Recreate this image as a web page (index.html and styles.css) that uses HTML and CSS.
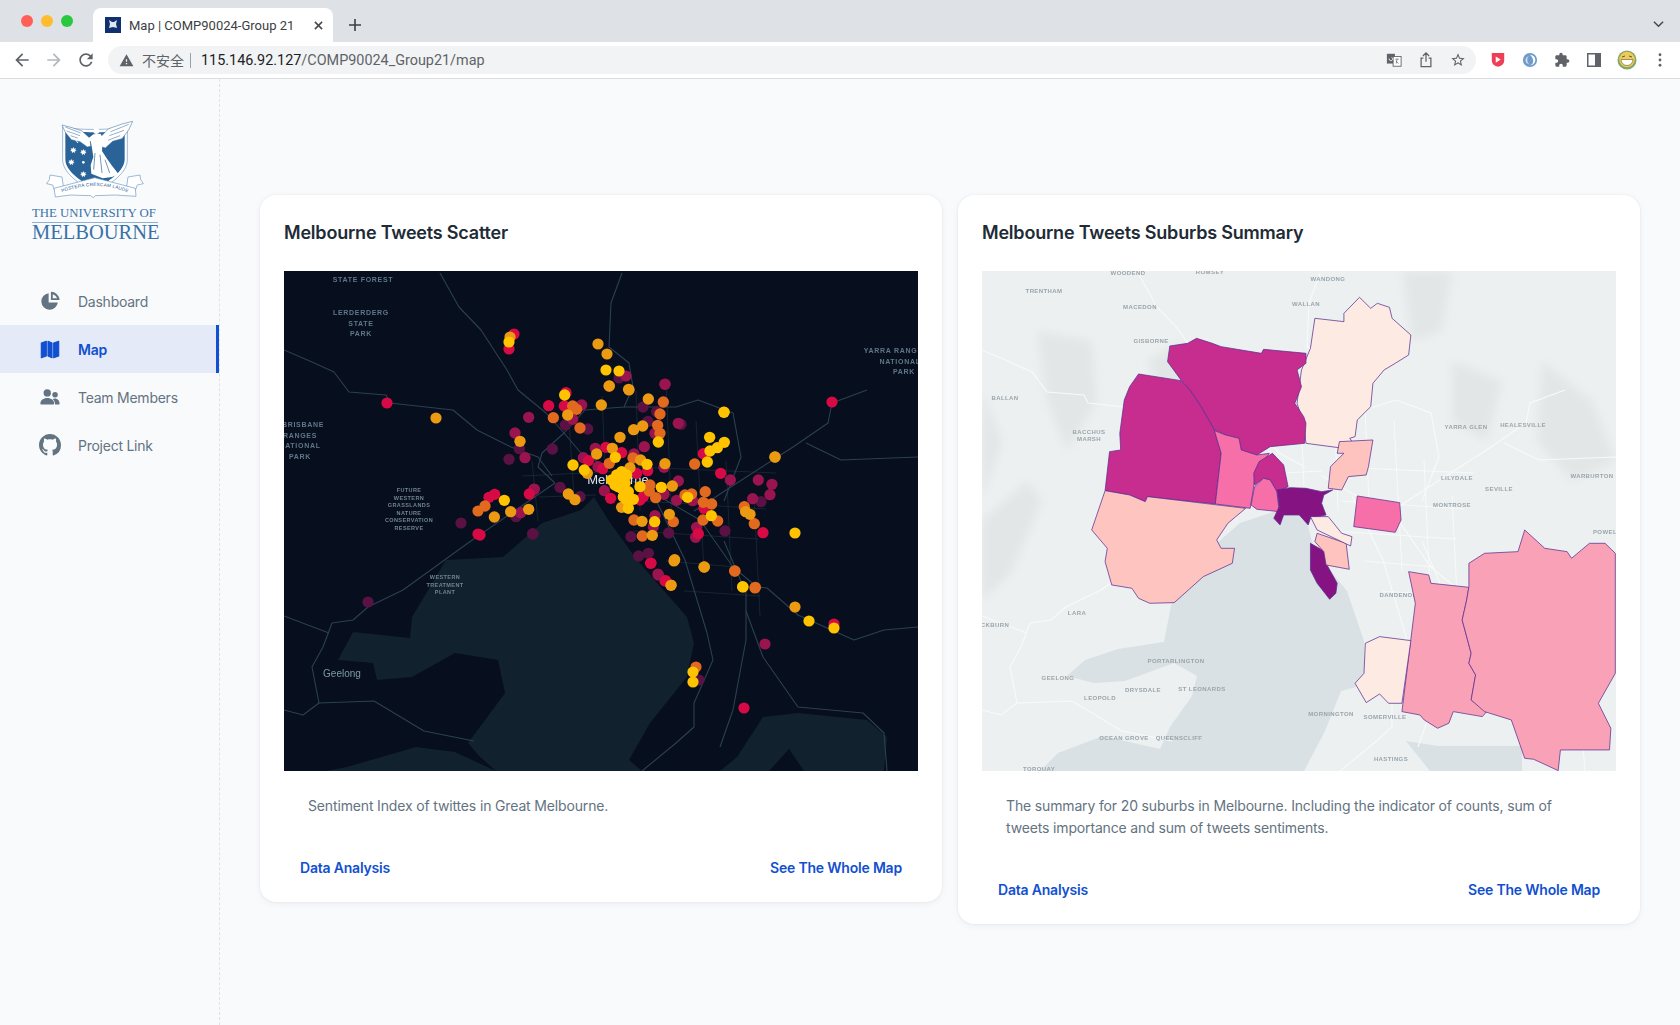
FILE: index.html
```html
<!DOCTYPE html>
<html lang="en">
<head>
    <meta charset="UTF-8">
    <title>Map | COMP90024-Group 21</title>
    <link rel="stylesheet" href="styles.css">
</head>
<body>
    <!-- Browser frame -->
    <div class="tabstrip">
        <div class="lights"><i class="red"></i><i class="amber"></i><i class="green"></i></div>
        <div class="tab">
            <svg class="favicon" viewBox="0 0 16 16"><rect width="16" height="16" fill="#10306f"/><path d="M4 3l3 2 2 0 3-2-1 4 1 4-4-1-4 1 1-4z" fill="#dfe7f3"/></svg>
            <span class="tab-title">Map | COMP90024-Group 21</span>
            <svg class="tab-close" viewBox="0 0 10 10"><path d="M1 1l8 8M9 1l-8 8" stroke="#45484d" stroke-width="1.7"/></svg>
        </div>
        <svg class="tab-new" viewBox="0 0 12 12"><path d="M6 0v12M0 6h12" stroke="#3c4043" stroke-width="1.6"/></svg>
        <svg class="tab-list" viewBox="0 0 12 8"><path d="M1 1.5l5 5 5-5" fill="none" stroke="#45484d" stroke-width="1.6"/></svg>
    </div>
    <div class="toolbar">
        <svg class="tool" viewBox="0 0 24 24"><path fill="#5f6368" d="M20 11H7.830l5.590-5.590L12 4l-8 8 8 8 1.410-1.410L7.830 13H20v-2z"/></svg>
        <svg class="tool" viewBox="0 0 24 24"><path fill="#b4b7bb" d="M4 11h12.170l-5.590-5.590L12 4l8 8-8 8-1.410-1.410L16.170 13H4v-2z"/></svg>
        <svg class="tool" viewBox="0 0 24 24"><path fill="#5f6368" d="M17.650 6.350C16.200 4.900 14.210 4 12 4c-4.420 0-7.990 3.580-7.990 8s3.570 8 7.990 8c3.730 0 6.840-2.550 7.730-6h-2.080c-.82 2.330-3.040 4-5.650 4-3.310 0-6-2.690-6-6s2.690-6 6-6c1.660 0 3.140.69 4.220 1.780L13 11h7V4l-2.350 2.350z"/></svg>
        <div class="omnibox">
            <svg class="warn" viewBox="0 0 24 24"><path fill="#5f6368" d="M1 21h22L12 2 1 21zm12-3h-2v-2h2v2zm0-4h-2v-4h2v4z"/></svg>
            <span class="insecure">不安全</span>
            <span class="url"><b>115.146.92.127</b>/COMP90024_Group21/map</span>
            <svg class="omni-icon" viewBox="0 0 18 18"><rect x="1" y="2" width="9" height="11" fill="#5f6368"/><rect x="8" y="5" width="9" height="11" fill="#fff" stroke="#5f6368"/><path d="M3.500 7.500a2 2 0 1 0 3-1.500" fill="none" stroke="#fff"/><path d="M10.500 8h4M12.500 8l-1 5M11 10l3 3" fill="none" stroke="#5f6368" stroke-width=".8"/></svg>
            <svg class="omni-icon" viewBox="0 0 18 18"><path d="M9 1v10M5.500 4.500L9 1l3.500 3.500M6 7H3.500v9.500h11V7H12" fill="none" stroke="#5f6368" stroke-width="1.400"/></svg>
            <svg class="omni-icon" viewBox="0 0 24 24"><path fill="#5f6368" d="M22 9.240l-7.190-.62L12 2 9.190 8.630 2 9.240l5.460 4.730L5.820 21 12 17.270 18.180 21l-1.630-7.030L22 9.240zM12 15.400l-3.760 2.270 1-4.280-3.320-2.880 4.380-.38L12 6.100l1.710 4.040 4.380.38-3.320 2.880 1 4.280L12 15.400z"/></svg>
        </div>
        <div class="extensions">
            <svg class="ext" viewBox="0 0 16 18"><path d="M1 1h14v8.500a7 7 0 0 1-7 7 7 7 0 0 1-7-7z" fill="#ef3f56"/><path d="M5.500 5l5.500 3.500-5.500 3.500z" fill="#fff"/></svg>
            <svg class="ext" viewBox="0 0 18 18"><circle cx="9" cy="9" r="8" fill="#6f9bcb"/><path d="M9 3a6 6 0 0 1 0 12c3-1 4-3 3.500-6S10 4 9 3z" fill="#fff"/><path d="M9 4c-2.500 1-3.500 3-3 6s2 3.500 3 4c-4-.5-5-3-5-5s2-4.500 5-5z" fill="#d5e3f1"/></svg>
            <svg class="ext" viewBox="0 0 24 24"><path fill="#5f6368" d="M20.500 11H19V7c0-1.100-.9-2-2-2h-4V3.500C13 2.120 11.880 1 10.500 1S8 2.120 8 3.500V5H4c-1.100 0-1.990.9-1.990 2v3.800H3.500c1.490 0 2.700 1.210 2.700 2.700s-1.210 2.700-2.700 2.700H2V20c0 1.100.9 2 2 2h3.800v-1.500c0-1.490 1.210-2.700 2.700-2.700 1.490 0 2.700 1.210 2.700 2.700V22H17c1.100 0 2-.9 2-2v-4h1.500c1.380 0 2.500-1.120 2.500-2.500S21.880 11 20.500 11z"/></svg>
            <svg class="ext" viewBox="0 0 16 16"><path fill="#5f6368" d="M1 1h14v14H1zM2.500 2.500v11H9v-11z" fill-rule="evenodd"/></svg>
            <svg class="ext avatar" viewBox="0 0 20 20"><circle cx="10" cy="10" r="9.500" fill="#7fa868"/><circle cx="10" cy="9.500" r="7.800" fill="#efc95a"/><path d="M4 9.500h12a6 6 0 0 1-12 0z" fill="#fff" stroke="#6a5a2a" stroke-width=".6"/><path d="M5 7l3-1M12 6l3 1" stroke="#6a5a2a"/></svg>
            <svg class="ext kebab" viewBox="0 0 4 16"><circle cx="2" cy="2" r="1.600" fill="#5f6368"/><circle cx="2" cy="8" r="1.600" fill="#5f6368"/><circle cx="2" cy="14" r="1.600" fill="#5f6368"/></svg>
        </div>
    </div>

    <div class="app">
        <aside class="sidebar">
            <div class="logo">
                <svg class="crest" viewBox="135 85 300 240">
                    <!-- ribbon ends -->
                    <path d="M150 256l36 6 4 28-26 12-6-16-18-4 8-12z" fill="#fff" stroke="#6b97c4" stroke-width="2"/>
                    <path d="M420 256l-36 6-4 28 26 12 6-16 18-4-8-12z" fill="#fff" stroke="#6b97c4" stroke-width="2"/>
                    <!-- shield -->
                    <path d="M188 112c40 10 155 10 194-2v100c0 40-50 72-97 102-47-30-97-62-97-102z" fill="#fff" stroke="#6b97c4" stroke-width="2"/>
                    <path d="M196 122c40 8 140 8 178-2v88c0 36-44 64-89 92-45-28-89-56-89-92z" fill="#2a6397"/>
                    <!-- wings -->
                    <path d="M186 106l30 8 30 10 24 22 2 24-10 2-22-16-26-6-18-22z" fill="#fff" stroke="#2a6397" stroke-width="1.500"/>
                    <path d="M200 124l40 14M212 138l34 12M196 112l46 18" stroke="#2a6397" stroke-width="1.500" fill="none"/>
                    <path d="M398 95l-32 8-40 14-24 24 2 30 12 4 22-20 28-8 20-26z" fill="#fff" stroke="#2a6397" stroke-width="1.500"/>
                    <path d="M372 122l-44 16M360 138l-36 14M386 104l-54 22" stroke="#2a6397" stroke-width="1.500" fill="none"/>
                    <!-- figure -->
                    <circle cx="289" cy="124" r="9" fill="#fff"/>
                    <path d="M280 134l22-2 6 14-2 38 14 22 16 22 20 26-20 8-28 4-34-14-2-26 8-24-4-26-4-22-16 4-24-10 2-6 26 8z" fill="#fff"/>
                    <path d="M285 190l-4 50M300 195l6 55M315 210l14 40" stroke="#2a6397" stroke-width="2" fill="none"/>
                    <path d="M220 142l14 18" stroke="#fff" stroke-width="3"/>
                    <!-- southern cross -->
                    <path id="star" d="M220 172l2.400 5.600 5.600-2-2.400 5.400 4.400 3-5.600 1-.4 5.800-4-4.200-4 4.200-.4-5.800-5.600-1 4.400-3-2.400-5.400 5.600 2z" fill="#fff"/>
                    <use href="#star" x="30" y="6"/><use href="#star" x="-6" y="36"/><use href="#star" x="30" y="72"/>
                    <circle cx="250" cy="218" r="4" fill="#fff"/>
                    <!-- motto -->
                    <path d="M162 296l122-32 122 32 2 24-62-4-60 2-6 6-8-6-60-2-46 6z" fill="#fff" stroke="#6b97c4" stroke-width="2"/>
                    <path id="motto" d="M168 316Q285 262 402 316" fill="none"/>
                    <text class="motto"><textPath href="#motto" startOffset="50%" text-anchor="middle">POSTERA CRESCAM LAUDE</textPath></text>
                </svg>
                <div class="uni-small">THE UNIVERSITY OF</div>
                <div class="uni-big">MELBOURNE</div>
            </div>
            <nav class="menu">
                <a class="menu-item" href="#">
                    <svg class="menu-icon" viewBox="0 0 24 24"><path d="M10.500 3.500A9 9 0 1 0 20.500 13.500h-10z"/><path fill-rule="evenodd" d="M13 2v9h9.500A9.500 9.500 0 0 0 13 2zm2 2.600A7.300 7.300 0 0 1 19.800 9H15z"/></svg>
                    Dashboard
                </a>
                <a class="menu-item active" href="#">
                    <svg class="menu-icon" viewBox="0 0 24 24"><path d="M2.500 5.500l5.500-2v16l-5.500 2zM9.800 3.500l4.400 2v16l-4.400-2zM16 5.500l5.500-2v16l-5.500 2z" stroke="currentColor" stroke-width="1.200" stroke-linejoin="round"/></svg>
                    Map
                </a>
                <a class="menu-item" href="#">
                    <svg class="menu-icon" viewBox="0 0 24 24"><circle cx="9" cy="7.500" r="4"/><circle cx="17.500" cy="9.500" r="3"/><path d="M9 13c-4.200 0-7.500 2.500-7.500 6 0 .8.500 1.300 1.200 1.300h12.600c.7 0 1.200-.5 1.200-1.300 0-3.500-3.300-6-7.500-6z"/><path d="M17.500 13.500c-1 0-1.900.2-2.700.6 1.700 1.300 2.700 3.500 2.700 6.200h4.200c.5 0 .8-.4.8-.9 0-3.300-2.200-5.900-5-5.900z"/></svg>
                    Team Members
                </a>
                <a class="menu-item" href="#">
                    <svg class="menu-icon" viewBox="0 0 16 16"><path d="M8 0C3.580 0 0 3.580 0 8c0 3.540 2.290 6.530 5.470 7.590.4.070.55-.17.55-.38 0-.19-.01-.82-.01-1.490-2.010.37-2.530-.49-2.690-.94-.09-.23-.48-.94-.82-1.130-.28-.15-.68-.52-.01-.53.63-.01 1.080.58 1.230.82.72 1.210 1.870.87 2.330.66.070-.52.28-.87.51-1.070-1.780-.2-3.640-.89-3.640-3.950 0-.87.31-1.590.82-2.150-.08-.2-.36-1.020.08-2.120 0 0 .67-.21 2.200.82.64-.18 1.320-.27 2-.27.68 0 1.360.09 2 .27 1.530-1.040 2.200-.82 2.200-.82.44 1.100.16 1.920.08 2.120.51.56.82 1.270.82 2.150 0 3.070-1.870 3.750-3.650 3.950.29.25.54.73.54 1.480 0 1.070-.01 1.930-.01 2.200 0 .21.15.46.55.38A8.013 8.013 0 0 0 16 8c0-4.420-3.580-8-8-8z"/></svg>
                    Project Link
                </a>
            </nav>
        </aside>

        <main class="content">
            <section class="card">
                <h2 class="card-title">Melbourne Tweets Scatter</h2>
                <svg class="map" viewBox="0 0 634 500">
                    <defs>
                        <!-- roads are shared by both maps -->
                        <g id="roads">
                            <path d="M0 79L28 91 50 101 65 121 102 124 106 132 169 139 193 159 227 176 254 186 268 205"/>
                            <path d="M156 2L175 36 197 59 223 99 234 119 262 142 280 162 297 182 323 196"/>
                            <path d="M338 2L327 32 325 76 345 92 349 116 340 136 301 139 280 162 258 182 254 196 271 212"/>
                            <path d="M271 212L184 272 119 319 84 336 69 349 48 352 39 376 28 396 35 432 19 444 0 439"/>
                            <path d="M340 205L416 249 449 296 473 316 483 317 514 344 570 369 600 359 634 356"/>
                            <path d="M370 225L401 289 423 362 429 389 410 432 410 456 392 472 358 500"/>
                            <path d="M440 270L462 322 462 369 449 439 436 476"/>
                            <path d="M462 340L479 386 514 436 579 442 600 462 603 500"/>
                            <path d="M410 240L453 212 509 176 544 152 548 132 583 119"/>
                            <path d="M522 172L557 189 634 186"/>
                            <path d="M340 136L392 136 414 129 449 142 457 186 440 230"/>
                            <path d="M35 432L90 430 140 460 190 470"/>
                            <path d="M0 345L45 362"/>
                        </g>
                        <g id="streets">
                            <path d="M248 190L254 250M285 150L290 225M318 125L322 215M352 120L356 240M382 112L388 255M412 150L420 300M442 190L448 320M470 225L476 345"/>
                            <path d="M238 205L340 200M255 226L312 224M352 196L492 202M360 230L482 238M350 260L474 268M382 290L452 296M400 320L476 325"/>
                        </g>
                        <filter id="soft"><feGaussianBlur stdDeviation="5"/></filter>
                    </defs>
                    <rect width="634" height="500" fill="#070e1d"/>
                    <path fill="#11212e" d="M310 226L297 239 258 252 219 286 162 289 128 346 126 367 69 361 54 389 89 392 93 409 128 406 171 382 214 389 221 422 184 472 195 485 212 500H358L345 489 366 452 403 406 410 372 403 346 353 289 325 250z"/>
                    <path fill="#11212e" d="M132 476L171 481 212 500H41L63 496z"/>
                    <path fill="#11212e" d="M453 486L479 446 514 442 583 449 603 466 600 500H436z"/>
                    <path d="M485 500L505 478 520 500z" fill="#070e1d"/>
                    <use href="#streets" fill="none" stroke="#1a2b3b" stroke-width=".8"/>
                    <use href="#roads" fill="none" stroke="#2b4053" stroke-width="1.100" stroke-linejoin="round"/>
                    <text class="lab-dark" x="79" y="11">STATE FOREST</text>
                    <text class="lab-dark" x="77" y="44">LERDERDERG</text>
                    <text class="lab-dark" x="77" y="55">STATE</text>
                    <text class="lab-dark" x="77" y="65">PARK</text>
                    <text class="lab-dark" x="612" y="82">YARRA RANGES</text>
                    <text class="lab-dark" x="616" y="93">NATIONAL</text>
                    <text class="lab-dark" x="620" y="103">PARK</text>
                    <text class="lab-dark" x="19" y="156">BRISBANE</text>
                    <text class="lab-dark" x="16" y="167">RANGES</text>
                    <text class="lab-dark" x="16" y="177">NATIONAL</text>
                    <text class="lab-dark" x="16" y="188">PARK</text>
                    <g class="lab-tiny">
                        <text class="lab-dark" x="125" y="221">FUTURE</text>
                        <text class="lab-dark" x="125" y="229">WESTERN</text>
                        <text class="lab-dark" x="125" y="236">GRASSLANDS</text>
                        <text class="lab-dark" x="125" y="244">NATURE</text>
                        <text class="lab-dark" x="125" y="251">CONSERVATION</text>
                        <text class="lab-dark" x="125" y="259">RESERVE</text>
                        <text class="lab-dark" x="161" y="308">WESTERN</text>
                        <text class="lab-dark" x="161" y="316">TREATMENT</text>
                        <text class="lab-dark" x="161" y="323">PLANT</text>
                    </g>
                    <text class="lab-geelong" x="58" y="406">Geelong</text>
                    <text class="lab-city" x="334" y="213">Melbourne</text>
                    <!-- outer points -->
                    <g class="dots">
                        <circle class="r" cx="230" cy="63"/><circle class="a" cx="226" cy="66"/><circle class="r" cx="225" cy="78"/><circle class="y" cx="225" cy="71"/>
                        <circle class="a" cx="314" cy="73"/><circle class="a" cx="323" cy="83"/><circle class="p" cx="335" cy="107"/><circle class="c" cx="342" cy="105"/><circle class="y" cx="322" cy="99"/><circle class="y" cx="335" cy="100"/>
                        <circle class="o" cx="325" cy="115"/><circle class="a" cx="345" cy="119"/><circle class="c" cx="381" cy="113"/>
                        <circle class="r" cx="103" cy="132"/><circle class="a" cx="152" cy="147"/><circle class="r" cx="548" cy="131"/><circle class="y" cx="440" cy="141"/>
                        <circle class="y" cx="511" cy="262"/><circle class="a" cx="491" cy="186"/>
                        <circle class="p" cx="84" cy="331"/><circle class="o" cx="451" cy="300"/><circle class="a" cx="420" cy="296"/><circle class="c" cx="374" cy="303"/><circle class="r" cx="367" cy="292"/><circle class="r" cx="381" cy="310"/><circle class="a" cx="387" cy="314"/><circle class="a" cx="390" cy="290"/>
                        <circle class="y" cx="459" cy="316"/><circle class="o" cx="471" cy="317"/><circle class="a" cx="511" cy="336"/><circle class="y" cx="525" cy="350"/><circle class="r" cx="550" cy="353"/><circle class="y" cx="550" cy="357"/>
                        <circle class="c" cx="481" cy="373"/><circle class="p" cx="415" cy="409"/><circle class="o" cx="412" cy="396"/><circle class="y" cx="409" cy="401"/><circle class="y" cx="409" cy="411"/><circle class="r" cx="460" cy="437"/>
                        <circle class="p" cx="177" cy="252"/><circle class="r" cx="194" cy="263"/><circle class="p" cx="249" cy="263"/>
                        <circle class="o" cx="194" cy="240"/><circle class="c" cx="250" cy="218"/>
                    </g>
                    <!-- centre points, in the scale of the cluster -->
                    <g class="dots-centre" transform="translate(196 109) scale(.3333)">
                        <circle class="p" cx="118" cy="206"/><circle class="p" cx="217" cy="207"/><circle class="p" cx="87" cy="238"/><circle class="p" cx="256" cy="135"/><circle class="p" cx="323" cy="147"/><circle class="p" cx="489" cy="81"/><circle class="p" cx="530" cy="95"/><circle class="p" cx="504" cy="124"/><circle class="p" cx="603" cy="133"/><circle class="p" cx="843" cy="365"/><circle class="p" cx="735" cy="453"/><circle class="p" cx="566" cy="459"/><circle class="p" cx="453" cy="470"/><circle class="p" cx="476" cy="528"/><circle class="p" cx="505" cy="520"/><circle class="p" cx="300" cy="350"/><circle class="p" cx="240" cy="322"/><circle class="p" cx="108" cy="410"/><circle class="p" cx="158" cy="461"/>
                        <circle class="c" cx="146" cy="112"/><circle class="c" cx="305" cy="75"/><circle class="c" cx="278" cy="118"/><circle class="c" cx="555" cy="13"/><circle class="c" cx="525" cy="160"/><circle class="c" cx="493" cy="200"/><circle class="c" cx="595" cy="130"/><circle class="c" cx="105" cy="159"/><circle class="c" cx="135" cy="233"/><circle class="c" cx="346" cy="205"/><circle class="c" cx="462" cy="222"/><circle class="c" cx="310" cy="233"/><circle class="c" cx="354" cy="260"/><circle class="c" cx="552" cy="262"/><circle class="c" cx="595" cy="303"/><circle class="c" cx="751" cy="300"/><circle class="c" cx="835" cy="300"/><circle class="c" cx="876" cy="313"/><circle class="c" cx="870" cy="344"/><circle class="c" cx="818" cy="356"/><circle class="c" cx="552" cy="343"/><circle class="c" cx="590" cy="361"/><circle class="c" cx="638" cy="362"/><circle class="c" cx="650" cy="442"/><circle class="c" cx="647" cy="472"/><circle class="c" cx="525" cy="407"/><circle class="c" cx="520" cy="440"/><circle class="c" cx="535" cy="585"/><circle class="c" cx="373" cy="332"/><circle class="c" cx="163" cy="328"/><circle class="c" cx="122" cy="398"/>
                        <circle class="r" cx="258" cy="38"/><circle class="r" cx="206" cy="77"/><circle class="r" cx="253" cy="78"/><circle class="r" cx="378" cy="202"/><circle class="r" cx="425" cy="218"/><circle class="r" cx="325" cy="242"/><circle class="r" cx="368" cy="266"/><circle class="r" cx="503" cy="272"/><circle class="r" cx="670" cy="221"/><circle class="r" cx="722" cy="280"/><circle class="r" cx="672" cy="385"/><circle class="r" cx="849" cy="458"/><circle class="r" cx="655" cy="461"/><circle class="r" cx="512" cy="550"/><circle class="r" cx="557" cy="602"/><circle class="r" cx="392" cy="355"/><circle class="r" cx="148" cy="342"/><circle class="r" cx="44" cy="343"/><circle class="r" cx="27" cy="352"/><circle class="r" cx="0" cy="465"/><circle class="r" cx="470" cy="280"/><circle class="r" cx="490" cy="350"/><circle class="r" cx="480" cy="360"/>
                        <circle class="o" cx="278" cy="78"/><circle class="o" cx="290" cy="88"/><circle class="o" cx="220" cy="113"/><circle class="o" cx="300" cy="144"/><circle class="o" cx="550" cy="66"/><circle class="o" cx="540" cy="102"/><circle class="o" cx="533" cy="136"/><circle class="o" cx="540" cy="160"/><circle class="o" cx="644" cy="252"/><circle class="o" cx="459" cy="234"/><circle class="o" cx="388" cy="250"/><circle class="o" cx="676" cy="335"/><circle class="o" cx="510" cy="315"/><circle class="o" cx="508" cy="333"/><circle class="o" cx="527" cy="353"/><circle class="o" cx="615" cy="345"/><circle class="o" cx="635" cy="342"/><circle class="o" cx="670" cy="367"/><circle class="o" cx="695" cy="372"/><circle class="o" cx="669" cy="420"/><circle class="o" cx="713" cy="423"/><circle class="o" cx="793" cy="380"/><circle class="o" cx="823" cy="431"/><circle class="o" cx="580" cy="425"/><circle class="o" cx="462" cy="420"/><circle class="o" cx="487" cy="468"/><circle class="o" cx="764" cy="573"/><circle class="o" cx="826" cy="622"/><circle class="o" cx="15" cy="378"/>
                        <circle class="a" cx="388" cy="18"/><circle class="a" cx="446" cy="28"/><circle class="a" cx="364" cy="75"/><circle class="a" cx="505" cy="57"/><circle class="a" cx="263" cy="105"/><circle class="a" cx="461" cy="149"/><circle class="a" cx="488" cy="138"/><circle class="a" cx="420" cy="172"/><circle class="a" cx="120" cy="184"/><circle class="a" cx="885" cy="231"/><circle class="a" cx="397" cy="205"/><circle class="a" cx="482" cy="240"/><circle class="a" cx="350" cy="222"/><circle class="a" cx="322" cy="280"/><circle class="a" cx="450" cy="263"/><circle class="a" cx="555" cy="251"/><circle class="a" cx="577" cy="318"/><circle class="a" cx="797" cy="395"/><circle class="a" cx="810" cy="403"/><circle class="a" cx="568" cy="403"/><circle class="a" cx="486" cy="424"/><circle class="a" cx="517" cy="466"/><circle class="a" cx="584" cy="539"/><circle class="a" cx="673" cy="561"/><circle class="a" cx="573" cy="616"/><circle class="a" cx="265" cy="342"/><circle class="a" cx="285" cy="359"/><circle class="a" cx="92" cy="395"/><circle class="a" cx="146" cy="388"/><circle class="a" cx="43" cy="411"/><circle class="a" cx="425" cy="382"/>
                        <circle class="y" cx="254" cy="45"/><circle class="y" cx="535" cy="186"/><circle class="y" cx="732" cy="97"/><circle class="y" cx="689" cy="172"/><circle class="y" cx="733" cy="187"/><circle class="y" cx="712" cy="203"/><circle class="y" cx="690" cy="213"/><circle class="y" cx="682" cy="246"/><circle class="y" cx="406" cy="232"/><circle class="y" cx="279" cy="255"/><circle class="y" cx="313" cy="270"/><circle class="y" cx="501" cy="253"/><circle class="y" cx="544" cy="322"/><circle class="y" cx="480" cy="320"/><circle class="y" cx="623" cy="352"/><circle class="y" cx="694" cy="407"/><circle class="y" cx="524" cy="425"/><circle class="y" cx="788" cy="620"/><circle class="y" cx="73" cy="361"/>
                        <circle class="y" cx="395" cy="300"/><circle class="y" cx="410" cy="285"/><circle class="y" cx="425" cy="275"/><circle class="y" cx="440" cy="285"/><circle class="y" cx="420" cy="305"/><circle class="y" cx="405" cy="315"/><circle class="y" cx="425" cy="325"/><circle class="y" cx="445" cy="335"/><circle class="y" cx="430" cy="350"/><circle class="y" cx="440" cy="360"/><circle class="y" cx="460" cy="358"/><circle class="y" cx="445" cy="385"/><circle class="y" cx="410" cy="300"/><circle class="y" cx="430" cy="295"/><circle class="y" cx="435" cy="310"/><circle class="y" cx="415" cy="320"/>
                    </g>
                </svg>
                <p class="card-text">Sentiment Index of twittes in Great Melbourne.</p>
                <div class="card-actions"><a href="#">Data Analysis</a><a href="#">See The Whole Map</a></div>
            </section>

            <section class="card">
                <h2 class="card-title">Melbourne Tweets Suburbs Summary</h2>
                <svg class="map" viewBox="0 0 634 500">
                    <rect width="634" height="500" fill="#ecf0f1"/>
                    <g fill="#e2e6e6" filter="url(#soft)">
                        <path d="M55 60L110 70 115 130 85 180 65 130zM165 90L200 70 220 100 190 140zM420 0H470L460 60 430 70zM470 90L520 110 505 170 470 150zM560 90L610 130 634 190 590 210 555 170zM0 120L20 170 0 230zM0 250L45 210 60 230 30 300 0 330z"/>
                    </g>
                    <path fill="#d9e1e4" d="M310 226L297 239 258 252 219 286 190 330 182 371 136 378 103 389 85 405 112 412 143 410 192 392 215 405 210 425 188 456 178 478 121 465 76 482 58 500H322L343 460 359 420 382 414 382 370 365 320 332 280 325 250z"/>
                    <path fill="#d9e1e4" d="M424 470L456 475 540 475 540 500H448z"/>
                    <use href="#streets" fill="none" stroke="#f8fafa" stroke-width=".9"/>
                    <use href="#roads" fill="none" stroke="#f8fafa" stroke-width="1.100"/>
                    <g class="lab-light">
                        <text x="146" y="4">WOODEND</text><text x="228" y="3">ROMSEY</text><text x="62" y="22">TRENTHAM</text><text x="346" y="10">WANDONG</text><text x="324" y="35">WALLAN</text><text x="158" y="38">MACEDON</text><text x="169" y="72">GISBORNE</text><text x="23" y="129">BALLAN</text><text x="107" y="163">BACCHUS</text><text x="107" y="170">MARSH</text><text x="484" y="158">YARRA GLEN</text><text x="541" y="156">HEALESVILLE</text><text x="475" y="209">LILYDALE</text><text x="610" y="207">WARBURTON</text><text x="517" y="220">SEVILLE</text><text x="470" y="236">MONTROSE</text><text x="625" y="263">POWELL</text><text x="95" y="344">LARA</text><text x="13" y="356">CKBURN</text><text x="419" y="326">DANDENONG</text><text x="194" y="392">PORTARLINGTON</text><text x="76" y="409">GEELONG</text><text x="161" y="421">DRYSDALE</text><text x="220" y="420">ST LEONARDS</text><text x="118" y="429">LEOPOLD</text><text x="349" y="445">MORNINGTON</text><text x="403" y="448">SOMERVILLE</text><text x="142" y="469">OCEAN GROVE</text><text x="197" y="469">QUEENSCLIFF</text><text x="409" y="490">HASTINGS</text><text x="57" y="500">TORQUAY</text>
                    </g>
                    <!-- suburbs traced in a stretched grid, hence the scale -->
                    <g class="suburbs" transform="translate(-22 -81) scale(.4464 .3333)">
                        <path fill="#fdeae3" d="M895 322L920 355 935 340 962 352 968 385 1010 435 1005 495 975 520 950 540 925 580 920 650 890 690 885 740 873 745 887 770 848 773 775 760 770 700 755 640 765 540 785 475 795 385 860 395 860 370z"/>
                        <path fill="#c72c8f" d="M465 515L470 468 510 460 530 445 565 460 585 470 675 490 680 478 775 490 775 520 755 540 765 590 750 640 770 680 775 700 772 760 695 770 665 795 630 780 625 745 595 735 570 720 540 650 515 600 495 570z"/>
                        <path fill="#c72c8f" d="M400 552L495 572 515 600 540 650 570 720 585 790 572 942 420 920 415 935 380 915 325 902 335 785 360 780 358 730 368 630 380 590z"/>
                        <path fill="#f76fa8" d="M570 722L595 735 625 745 630 780 665 795 693 790 660 850 658 890 650 955 572 942 585 790z"/>
                        <path fill="#c72c8f" d="M700 790L725 825 735 890 710 905 695 870 680 865 660 885 658 850 670 815z"/>
                        <path fill="#f76fa8" d="M680 865L695 870 710 905 715 965 665 958 652 945 660 890z"/>
                        <path fill="#851482" d="M710 900L740 893 775 895 810 905 835 900 815 915 810 940 820 975 785 985 780 1005 760 975 725 975 717 1005 703 985 715 950z"/>
                        <path fill="#fec3bf" d="M850 755L925 750 915 830 910 855 870 860 855 900 825 895 830 830 860 790 845 790z"/>
                        <path fill="#fdc4c0" d="M325 902L380 915 415 935 420 920 640 955 600 1000 575 1050 585 1075 615 1075 610 1120 545 1160 480 1238 425 1240 400 1225 385 1195 340 1185 325 1115 330 1075 295 1020z"/>
                        <path fill="#851482" d="M785 1060L818 1085 820 1120 845 1180 842 1210 828 1228 800 1180 785 1140z"/>
                        <path fill="#fec3bf" d="M800 1030L865 1060 872 1138 820 1125 815 1085 795 1055z"/>
                        <path fill="#fdeae3" d="M785 980L825 980 855 1030 878 1040 875 1068 800 1020z"/>
                        <path fill="#f76fa8" d="M890 918L985 938 988 990 975 1027 882 1010z"/>
                        <path fill="#f9a2b7" d="M1005 1145L1050 1155 1055 1180 1140 1192 1135 1230 1125 1290 1145 1390 1140 1420 1155 1455 1145 1530 1180 1565 1170 1580 1105 1565 1095 1600 1070 1615 1040 1590 1030 1575 990 1565 1020 1240z"/>
                        <path fill="#f9a2b7" d="M1140 1190L1140 1120 1175 1090 1250 1085 1265 1020 1310 1075 1360 1085 1370 1105 1410 1060 1445 1060 1468 1090 1468 1450 1430 1540 1458 1615 1455 1680 1345 1680 1340 1742 1285 1708 1265 1705 1235 1590 1175 1565 1145 1530 1155 1455 1140 1420 1145 1390 1125 1290 1135 1230z"/>
                        <path fill="#fdeae3" d="M940 1340L1010 1352 990 1540 960 1540 940 1512 910 1538 885 1480 905 1450 908 1360z"/>
                    </g>
                </svg>
                <p class="card-text">The summary for 20 suburbs in Melbourne. Including the indicator of counts, sum of tweets importance and sum of tweets sentiments.</p>
                <div class="card-actions"><a href="#">Data Analysis</a><a href="#">See The Whole Map</a></div>
            </section>
        </main>
    </div>
</body>
</html>
```

FILE: styles.css
```css
* {
    box-sizing: border-box;
}

body {
    margin: 0;
    height: 1025px;
    overflow: hidden;
    background-color: #f9fafc;
    color: #637381;
    font-family: Inter, "Noto Sans CJK SC", sans-serif;
    display: flex;
    flex-direction: column;
}

a {
    text-decoration: none;
}

/* Browser */
.tabstrip {
    height: 42px;
    background-color: #dee1e6;
    display: flex;
    align-items: flex-end;
    flex: none;
}

.lights {
    display: flex;
    gap: 8px;
    align-self: flex-start;
    margin: 15px 0 0 21px;
}

.lights i {
    width: 12px;
    height: 12px;
    border-radius: 50%;
}

.lights .red { background-color: #ff5f57; }
.lights .amber { background-color: #febc2e; }
.lights .green { background-color: #28c840; }

.tab {
    width: 240px;
    height: 34px;
    margin-left: 20px;
    padding: 0 10px 0 12px;
    background-color: #fff;
    border-radius: 8px 8px 0 0;
    display: flex;
    align-items: center;
}

.favicon {
    width: 16px;
    height: 16px;
}

.tab-title {
    margin-left: 8px;
    font-family: Roboto, sans-serif;
    font-size: 13px;
    color: #3c4043;
    flex: 1;
}

.tab-close {
    width: 9px;
    height: 9px;
}

.tab-new {
    width: 12px;
    height: 12px;
    margin: 0 0 11px 16px;
}

.tab-list {
    width: 11px;
    height: 8px;
    margin: 0 16px 14px auto;
}

.toolbar {
    height: 37px;
    flex: none;
    background-color: #fff;
    border-bottom: 1px solid #dadce0;
    display: flex;
    align-items: center;
    padding-left: 12px;
}

.tool {
    width: 20px;
    height: 20px;
    margin-right: 12px;
}

.omnibox {
    width: 1368px;
    height: 28px;
    padding: 0 10px 0 11px;
    background-color: #f1f3f4;
    border-radius: 14px;
    display: flex;
    align-items: center;
    font-size: 14px;
    color: #5f6368;
}

.warn {
    width: 15px;
    height: 15px;
}

.insecure {
    margin-left: 8px;
    padding-right: 6px;
    border-right: 1px solid #9aa0a6;
    font-family: "Noto Sans CJK SC", sans-serif;
    font-size: 14px;
    line-height: 15px;
}

.url {
    margin-left: 10px;
    font-family: Roboto, sans-serif;
    font-size: 14.400px;
    flex: 1;
}

.url b {
    font-weight: 400;
    color: #202124;
}

.omni-icon {
    width: 16px;
    height: 16px;
    margin-left: 16px;
}

.extensions {
    display: flex;
    align-items: center;
    gap: 16px;
    margin-left: 14px;
}

.ext {
    width: 16px;
    height: 16px;
}

.ext.avatar {
    width: 20px;
    height: 20px;
    margin: 0 -1px;
}

.ext.kebab {
    width: 4px;
    height: 14px;
    margin-left: 6px;
}

/* Page */
.app {
    flex: 1;
    display: flex;
    min-height: 0;
}

.sidebar {
    width: 220px;
    flex: none;
    border-right: 1px dashed #dfe3e8;
}

.logo {
    height: 202px;
    padding: 39px 0 0 32px;
    font-family: "Liberation Serif", serif;
    color: #3a72a8;
}

.crest {
    display: block;
    width: 100px;
    height: 80px;
    margin: 0 0 8px 13px;
}

.motto {
    font-family: "Liberation Sans", sans-serif;
    font-size: 14px;
    fill: #2a6397;
    letter-spacing: .6px;
}

.uni-small {
    width: 126px;
    font-size: 12.800px;
    line-height: 15px;
    white-space: nowrap;
    border-bottom: 1px solid #8fb0d0;
    padding-bottom: 1px;
}

.uni-big {
    font-size: 20.500px;
    line-height: 19px;
    white-space: nowrap;
}

.menu {
    margin-top: -4px;
}

.menu-item {
    height: 48px;
    padding-left: 39px;
    display: flex;
    align-items: center;
    gap: 17px;
    font-size: 14px;
    letter-spacing: -.25px;
    color: #637381;
}

.menu-item.active {
    background-color: #e4eaf7;
    border-right: 3px solid #1150d0;
    color: #1150d0;
    font-weight: 600;
}

.menu-icon {
    width: 22px;
    height: 22px;
    fill: currentColor;
    flex: none;
}

.content {
    flex: 1;
    padding: 116px 40px 0;
    display: grid;
    grid-template-columns: 1fr 1fr;
    gap: 16px;
    align-items: start;
}

.card {
    padding: 24px 24px 20px;
    background-color: #fff;
    border-radius: 16px;
    box-shadow: 0 0 2px rgba(145, 158, 171, .2), 0 2px 8px -2px rgba(145, 158, 171, .2);
}

.card-title {
    margin: 0 0 24px;
    font-size: 18px;
    line-height: 28px;
    font-weight: 600;
    letter-spacing: -.2px;
    color: #212b36;
}

.map {
    display: block;
    width: 634px;
    height: 500px;
    filter: blur(.45px);
}

.card-text {
    margin: 24px 0 0;
    padding: 0 24px;
    font-size: 14px;
    line-height: 22px;
    letter-spacing: -.15px;
    color: #637381;
}

.card-actions {
    margin-top: 35px;
    padding: 0 16px;
    height: 30px;
    display: flex;
    align-items: center;
    justify-content: space-between;
    font-size: 14px;
    font-weight: 600;
    letter-spacing: -.2px;
}

.card-actions a {
    color: #1150d0;
}

/* Maps */
.dots circle {
    r: 5.600px;
}

.dots-centre circle {
    r: 17px;
}

.y { fill: #ffc300; }
.a { fill: #ec9a12; }
.o { fill: #e26a1f; }
.r { fill: #d80a45; }
.c { fill: #9a1450; }
.p { fill: #5a1244; }

.lab-dark {
    font-family: "Liberation Sans", sans-serif;
    font-size: 7px;
    font-weight: 700;
    letter-spacing: .7px;
    fill: #5f7789;
    text-anchor: middle;
}

.lab-tiny .lab-dark {
    font-size: 5.500px;
    letter-spacing: .4px;
    fill: #6f8494;
}

.lab-geelong {
    font-family: "Liberation Sans", sans-serif;
    font-size: 10px;
    fill: #7f98a8;
    text-anchor: middle;
}

.lab-city {
    font-family: "Liberation Sans", sans-serif;
    font-size: 13px;
    fill: #d9e3ea;
    text-anchor: middle;
}

.lab-light text {
    font-family: "Liberation Sans", sans-serif;
    font-size: 6px;
    font-weight: 700;
    letter-spacing: .4px;
    fill: #9aa5ab;
    text-anchor: middle;
}

.suburbs path {
    stroke: #5b2f8f;
    stroke-width: 1;
    stroke-opacity: .75;
    vector-effect: non-scaling-stroke;
}
```
